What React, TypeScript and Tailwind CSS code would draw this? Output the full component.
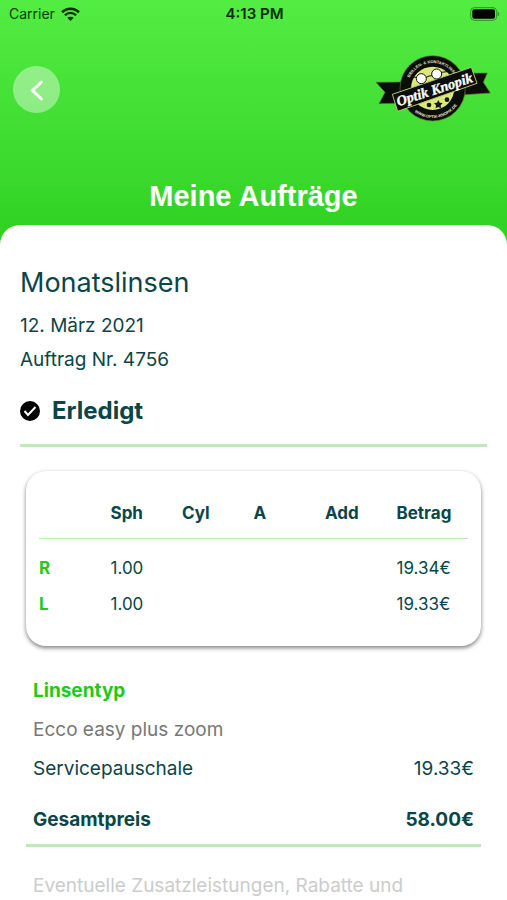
import type { ReactNode } from "react";

interface LensRow {
  eye: string;
  sph: string;
  cyl: string;
  axis: string;
  add: string;
  amount: string;
}

const columns = ["Sph", "Cyl", "A", "Add", "Betrag"];

const lensRows: LensRow[] = [
  { eye: "R", sph: "1.00", cyl: "", axis: "", add: "", amount: "19.34€" },
  { eye: "L", sph: "1.00", cyl: "", axis: "", add: "", amount: "19.33€" },
];

function StatusBar() {
  return (
    <div className="grid h-7 grid-cols-3 items-center pr-[7px] pl-[9px] leading-5 text-[#0b3a08]">
      <div className="flex items-center gap-1.5 text-sm">
        <span>Carrier</span>
        <svg viewBox="0 0 54 40" className="h-[14px] w-[19px]" fill="none" stroke="#062b04" aria-hidden="true">
          <path d="M3 15C16 1.500 38 1.500 51 15" strokeWidth="7.500" />
          <path d="M11 23.500C20 14.500 34 14.500 43 23.500" strokeWidth="6.500" />
          <path d="M27 40 18 31c5-4.500 13-4.500 18 0Z" fill="#062b04" stroke="none" />
        </svg>
      </div>
      <span className="text-center text-[15px] font-semibold whitespace-nowrap text-[#062b04]">4:13 PM</span>
      <svg viewBox="0 0 90 42" className="h-[14px] w-[30px] justify-self-end" aria-hidden="true">
        <rect x="2" y="2" width="78" height="38" rx="11" fill="none" stroke="#2b9420" strokeWidth="3" />
        <rect x="7" y="7" width="68" height="28" rx="6" fill="#000" />
        <path d="M83 14c6 2 6 12 0 14Z" fill="#2b9420" />
      </svg>
    </div>
  );
}

function Logo() {
  return (
    <svg viewBox="40 40 360 216" className="h-[72px] w-[120px]" role="img" aria-label="Optik Knopik">
      <defs>
        <path id="logo-arc-top" d="M143 146a76 76 0 0 1 152 0" />
        <path id="logo-arc-bottom" d="M130 146a89 89 0 0 0 178 0" />
      </defs>
      <g fill="#0a0d08" stroke="#5f7a35" strokeWidth="2">
        <path d="M49 128 128 127 150 190 58 192 76 158Z" />
        <path d="M308 101 383 100 371 128 392 160 316 165Z" />
        <circle cx="219" cy="146" r="98" />
      </g>
      <circle cx="219" cy="146" r="65" fill="#dce77c" />
      <g fontFamily="Liberation Sans" fontSize="12" fontWeight="700" fill="#e6ead9" textAnchor="middle">
        <text>
          <textPath href="#logo-arc-top" startOffset="50%">BRILLEN- &amp; KONTAKTLINSEN</textPath>
        </text>
        <text>
          <textPath href="#logo-arc-bottom" startOffset="55%">WWW.OPTIK-KNOPIK.DE</textPath>
        </text>
      </g>
      <path d="M98 164 335 83 352 131 114 215Z" fill="#0a0d08" stroke="#b4c765" strokeWidth="3" />
      <g stroke="#111" strokeWidth="3">
        <path d="M154 110 172 114M198 114Q208 107 218 108M245 98 262 96" fill="none" />
        <circle cx="185" cy="117" r="15" fill="#fff" />
        <circle cx="231" cy="103" r="15" fill="#fff" />
      </g>
      <g fill="#15180c">
        <circle cx="208" cy="196" r="7" />
        <path d="m236 181 4 8 9 1-6 7 1 9-8-4-8 4 1-9-6-7 9-1Z" />
        <circle cx="262" cy="180" r="7" />
      </g>
      <text
        x="224"
        y="164"
        transform="rotate(-18 224 149)"
        textAnchor="middle"
        fontFamily="Liberation Serif"
        fontSize="43"
        fontStyle="italic"
        fontWeight="700"
        fill="#fff"
        stroke="#fff"
        strokeWidth="1"
      >
        Optik Knopik
      </text>
    </svg>
  );
}

function PriceRow({ label, children, bold = false }: { label: string; children: ReactNode; bold?: boolean }) {
  return (
    <div className={`flex justify-between ${bold ? "font-bold" : ""}`}>
      <dt>{label}</dt>
      <dd>{children}</dd>
    </div>
  );
}

export default function App() {
  return (
    <div className="flex min-h-screen flex-col bg-linear-to-b from-[#53ec42] to-[#2fd122] to-[240px] font-['Inter',sans-serif] text-[#0a4547]">
      <header>
        <StatusBar />
        <div className="flex h-[122px] items-center justify-between pr-[14px] pl-[13px]">
          <button type="button" aria-label="Zurück" className="flex size-[47px] items-center justify-center rounded-full bg-white/40">
            <svg viewBox="0 0 24 24" className="size-6" fill="none" stroke="#fff" strokeWidth="3" strokeLinecap="round" aria-hidden="true">
              <path d="m16.500 5-9 8.500 9 8.500" />
            </svg>
          </button>
          <Logo />
        </div>
        <h1 className="flex h-[75px] items-center justify-center pt-5 pb-1 font-['Liberation_Sans',sans-serif] text-[29px] leading-9 font-bold text-white">
          Meine Aufträge
        </h1>
      </header>

      <main className="flex-1 rounded-t-[20px] bg-white px-5 pt-10">
        <section className="border-b-3 border-[#bcebb5] pb-[15px]">
          <h2 className="text-[27px] leading-9">Monatslinsen</h2>
          <p className="mt-2 text-[19px] leading-[34px]">12. März 2021</p>
          <p className="text-[19px] leading-[34px]">Auftrag Nr. 4756</p>
          <p className="mt-4 flex items-center gap-3 text-2xl leading-9 font-bold">
            <svg viewBox="0 0 20 20" className="size-5" aria-hidden="true">
              <circle cx="10" cy="10" r="10" fill="#000" />
              <path d="m4.500 10 3.500 4 7.500-8" fill="none" stroke="#fff" strokeWidth="2" />
            </svg>
            Erledigt
          </p>
        </section>

        <section className="mx-[6px] mt-6 rounded-[20px] bg-white px-[13px] py-6 shadow-[0_2px_4px_rgba(0,0,0,0.5)]">
          <table className="w-full table-fixed text-left text-[17px] leading-9">
            <thead>
              <tr className="border-b border-[#bcebb5]">
                <td />
                {columns.map((column) => (
                  <th key={column} scope="col" className="pb-[7px] font-bold">
                    {column}
                  </th>
                ))}
              </tr>
            </thead>
            <tbody>
              <tr className="h-[11px]" aria-hidden="true" />
              {lensRows.map((row) => (
                <tr key={row.eye}>
                  <th scope="row" className="font-bold text-[#23c917]">
                    {row.eye}
                  </th>
                  <td>{row.sph}</td>
                  <td>{row.cyl}</td>
                  <td>{row.axis}</td>
                  <td>{row.add}</td>
                  <td>{row.amount}</td>
                </tr>
              ))}
            </tbody>
          </table>
        </section>

        <section className="mx-[6px] mt-[25px] border-b-3 border-[#bcebb5] px-[7px] pb-[5px] text-[19px] leading-[39px]">
          <h3 className="font-bold text-[#23c917]">Linsentyp</h3>
          <p className="text-[#777]">Ecco easy plus zoom</p>
          <dl>
            <PriceRow label="Servicepauschale">19.33€</PriceRow>
            <div className="h-3" />
            <PriceRow label="Gesamtpreis" bold>
              58.00€
            </PriceRow>
          </dl>
        </section>
        <p className="mx-[13px] mt-[25px] text-[19px] leading-7 text-[#ccc]">Eventuelle Zusatzleistungen, Rabatte und</p>
      </main>
    </div>
  );
}
